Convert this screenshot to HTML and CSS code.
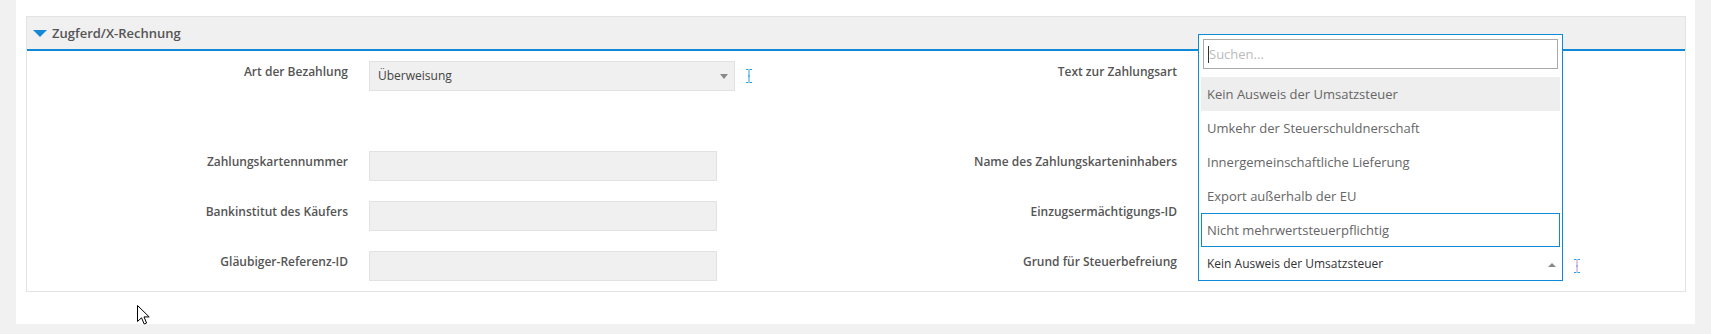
FILE: index.html
```html
<!DOCTYPE html>
<html lang="de">
<head>
  <meta charset="UTF-8" />
  <meta name="viewport" content="width=device-width, initial-scale=1.0"/>
  <title>Zugferd/X-Rechnung</title>
  <link rel="stylesheet" href="styles.css">
</head>
<body>
  <div class="page">
    <div class="panel">
      <div class="panel-head"><span class="caret"></span>Zugferd/X-Rechnung</div>

      <div class="panel-body">
        <div class="col">
          <div class="row row-tall">
            <label>Art der Bezahlung</label>
            <div class="field">
              <div class="select">Überweisung<span class="arrow-down"></span></div>
              <svg class="ibeam" width="8" height="14" viewBox="0 0 8 14">
                <path d="M1 0.5H3.5M4.5 0.5H7M4 1V13M3 7H5M1 13.5H3.5M4.5 13.5H7" stroke="#2b9de2" stroke-width="1" fill="none"/>
              </svg>
            </div>
          </div>
          <div class="row">
            <label>Zahlungskartennummer</label>
            <div class="field"><input class="input" type="text"></div>
          </div>
          <div class="row">
            <label>Bankinstitut des Käufers</label>
            <div class="field"><input class="input" type="text"></div>
          </div>
          <div class="row">
            <label>Gläubiger-Referenz-ID</label>
            <div class="field"><input class="input" type="text"></div>
          </div>
        </div>

        <div class="col">
          <div class="row row-tall">
            <label>Text zur Zahlungsart</label>
            <div class="field"><textarea class="input area"></textarea></div>
          </div>
          <div class="row">
            <label>Name des Zahlungskarteninhabers</label>
            <div class="field"><input class="input" type="text"></div>
          </div>
          <div class="row">
            <label>Einzugsermächtigungs-ID</label>
            <div class="field"><input class="input" type="text"></div>
          </div>
          <div class="row">
            <label>Grund für Steuerbefreiung</label>
            <div class="field">
              <div class="select-open">
                Kein Ausweis der Umsatzsteuer<span class="arrow-up"></span>

                <div class="dropdown">
                  <div class="search"><span class="text-cursor"></span>Suchen...</div>
                  <ul class="options">
                    <li class="hl">Kein Ausweis der Umsatzsteuer</li>
                    <li>Umkehr der Steuerschuldnerschaft</li>
                    <li>Innergemeinschaftliche Lieferung</li>
                    <li>Export außerhalb der EU</li>
                    <li class="focus">Nicht mehrwertsteuerpflichtig</li>
                  </ul>
                </div>
              </div>
              <svg class="ibeam" width="8" height="14" viewBox="0 0 8 14">
                <path d="M1 0.5H3.5M4.5 0.5H7M1 13.5H3.5M4.5 13.5H7M3 7H5" stroke="#2b9de2" stroke-width="1" fill="none"/>
                <path d="M4 1V13" stroke="#c48ad0" stroke-width="1"/>
              </svg>
            </div>
          </div>
        </div>
      </div>
    </div>
  </div>

  <svg class="pointer" width="13" height="20" viewBox="0 0 13 20">
    <path d="M0.5 0.5V16.5L4.5 12.8L7.2 19L9.6 18L7 11.9H12.2Z" fill="#fff" stroke="#000" stroke-width="1" stroke-linejoin="round"/>
  </svg>
</body>
</html>
```

FILE: styles.css
```css
body {
  margin: 0;
  background-color: #f1f1f1;
  font-family: "Open Sans", "Noto Sans", sans-serif;
  color: #555;
}

.page {
  box-sizing: border-box;
  width: 1679px;
  margin-left: 16px;
  padding: 16px 9px 32px 10px;
  background-color: #fff;
}

.panel {
  border: 1px solid #e3e3e3;
}

.panel-head {
  display: flex;
  align-items: center;
  height: 32px;
  padding-left: 6px;
  background-color: #f0f0f0;
  border-bottom: 2px solid #0e8ad6;
  font-size: 13px;
  font-weight: 600;
  color: #555;
}

.caret {
  width: 0;
  height: 0;
  border-left: 7px solid transparent;
  border-right: 7px solid transparent;
  border-top: 7px solid #1589d6;
  margin-right: 5px;
  margin-top: 1px;
}

.panel-body {
  display: grid;
  grid-template-columns: 1fr 1fr;
  padding: 10px 0;
}

.row {
  display: flex;
  margin-bottom: 20px;
}

.row:last-child {
  margin-bottom: 0;
}

.row-tall {
  min-height: 70px;
}

.row label {
  flex-shrink: 0;
  width: 321px;
  margin-right: 21px;
  padding-top: 2px;
  text-align: right;
  font-size: 12px;
  font-weight: 600;
  line-height: 17px;
  color: #555;
}

.field {
  display: flex;
  align-items: flex-start;
}

.input {
  box-sizing: border-box;
  width: 348px;
  height: 30px;
  margin: 0;
  border: 1px solid #e2e2e2;
  background-color: #f0f0f0;
  font-family: inherit;
}

.area {
  height: 70px;
  resize: none;
}

.select {
  position: relative;
  box-sizing: border-box;
  width: 366px;
  height: 30px;
  padding-left: 8px;
  border: 1px solid #e2e2e2;
  background-color: #f0f0f0;
  font-size: 12px;
  line-height: 28px;
  color: #444;
}

.arrow-down {
  position: absolute;
  right: 6px;
  top: 12px;
  width: 0;
  height: 0;
  border-left: 4px solid transparent;
  border-right: 4px solid transparent;
  border-top: 5px solid #888;
}

.ibeam {
  margin-left: 10px;
  margin-top: 8px;
}

.select-open {
  position: relative;
  box-sizing: border-box;
  width: 365px;
  height: 30px;
  padding-left: 8px;
  border: 1px solid #0e8ad6;
  border-top: none;
  background-color: #fff;
  font-size: 12px;
  line-height: 26px;
  color: #333;
}

.select-open + .ibeam {
  margin-top: 8px;
}

.arrow-up {
  position: absolute;
  right: 6px;
  top: 12px;
  width: 0;
  height: 0;
  border-left: 4px solid transparent;
  border-right: 4px solid transparent;
  border-bottom: 4px solid #888;
}

.dropdown {
  position: absolute;
  left: -1px;
  bottom: 100%;
  box-sizing: border-box;
  width: 365px;
  padding: 4px 0;
  border: 1px solid #0e8ad6;
  border-bottom: none;
  background-color: #fff;
  z-index: 5;
}

.search {
  display: flex;
  align-items: center;
  box-sizing: border-box;
  height: 30px;
  margin: 0 4px 8px;
  padding-left: 4px;
  border: 1px solid #aaa;
  font-size: 13px;
  color: #bbb;
}

.text-cursor {
  width: 1px;
  height: 17px;
  background-color: #333;
}

.options {
  list-style: none;
  margin: 0 2px;
  padding: 0;
}

.options li {
  height: 34px;
  padding-left: 6px;
  font-size: 13px;
  line-height: 34px;
  color: #666;
}

.options li.hl {
  background-color: #eee;
}

.options li.focus {
  box-sizing: border-box;
  padding-left: 5px;
  border: 1px solid #0e8ad6;
  line-height: 32px;
}

.pointer {
  position: absolute;
  left: 137px;
  top: 305px;
}
```
